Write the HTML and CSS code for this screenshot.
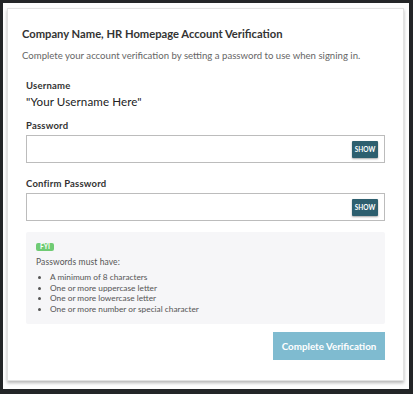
FILE: index.html
```html
<!DOCTYPE html>
<html>
<head>
<meta charset="utf-8">
<link rel="stylesheet" href="styles.css">
</head>
<body>
<div class="frame">
  <div class="card">
    <h1 class="title">Company Name, HR Homepage Account Verification</h1>
    <p class="intro">Complete your account verification by setting a password to use when signing in.</p>
    <div class="form">
      <div class="field">
        <div class="label">Username</div>
        <div class="value">"Your Username Here"</div>
      </div>
      <div class="field field-input">
        <div class="label">Password</div>
        <div class="input"><span class="show">SHOW</span></div>
      </div>
      <div class="field field-input">
        <div class="label">Confirm Password</div>
        <div class="input"><span class="show">SHOW</span></div>
      </div>
      <div class="fyi">
        <span class="badge">FYI</span>
        <p class="fyi-head">Passwords must have:</p>
        <ul class="rules">
          <li>A minimum of 8 characters</li>
          <li>One or more uppercase letter</li>
          <li>One or more lowercase letter</li>
          <li>One or more number or special character</li>
        </ul>
      </div>
      <div class="actions">
        <span class="btn">Complete Verification</span>
      </div>
    </div>
  </div>
</div>
</body>
</html>
```
FILE: styles.css
```css
html, body {
  margin: 0;
  padding: 0;
  background: #232527;
}
body {
  width: 413px;
  height: 394px;
  padding: 3px 4px 5px 3px;
  box-sizing: border-box;
  font-family: Lato, "Liberation Sans", sans-serif;
}
.frame {
  background: #fdfdfd;
  height: 100%;
  padding: 5px 5px 5px 4px;
  box-sizing: border-box;
}
.card {
  background: #fff;
  height: 373px;
  box-sizing: border-box;
  border: 1px solid #e2e2e2;
  box-shadow: 0 2px 3px rgba(0,0,0,0.28);
  padding: 17px 18px 0 14px;
}
.title {
  margin: 0;
  font-size: 11.2px;
  font-weight: 700;
  color: #333;
  line-height: 16px;
}
.intro {
  margin: 7px 0 0;
  font-size: 9.6px;
  color: #666;
  line-height: 14px;
}
.form {
  padding-left: 4px;
  margin-top: 16px;
}
.field {
  margin-bottom: 10px;
}
.field-input {
  margin-bottom: 14px;
}
.label {
  font-size: 9.5px;
  font-weight: 700;
  color: #333;
  letter-spacing: 0.2px;
  line-height: 13px;
  margin-bottom: 3px;
}
.value {
  font-size: 11.6px;
  color: #222;
  letter-spacing: 0.1px;
  line-height: 14px;
}
.input {
  height: 28px;
  box-sizing: border-box;
  border: 1px solid #bcbcbc;
  display: flex;
  align-items: center;
  justify-content: flex-end;
  padding-right: 6px;
}
.show {
  background: #2d5f6f;
  color: #fff;
  font-size: 6.5px;
  font-weight: 700;
  width: 26px;
  height: 17px;
  display: flex;
  align-items: center;
  justify-content: center;
  border-radius: 1px;
  box-shadow: 0 1px 2px rgba(0,0,0,0.35);
}
.fyi {
  background: #f6f6f8;
  border-radius: 2px;
  padding: 11px 10px 10px 10px;
  margin-top: -3px;
  font-size: 8.3px;
}
.badge {
  display: block;
  width: fit-content;
  background: #6fcb74;
  color: #fff;
  font-size: 6.5px;
  font-weight: 700;
  line-height: 8px;
  padding: 0 4px;
  border-radius: 2px;
}
.fyi-head {
  margin: 5px 0 0;
  font-size: 8.5px;
  color: #555;
  letter-spacing: 0.1px;
  line-height: 12px;
}
.rules {
  margin: 4px 0 0;
  padding-left: 14px;
  font-size: 8.3px;
  color: #555;
  line-height: 10.5px;
}
.actions {
  display: flex;
  justify-content: flex-end;
  margin-top: 8px;
}
.btn {
  background: #7fbbd0;
  color: #fff;
  font-size: 9.8px;
  font-weight: 700;
  width: 112px;
  height: 28px;
  display: flex;
  align-items: center;
  justify-content: center;
  box-sizing: border-box;
}
```
